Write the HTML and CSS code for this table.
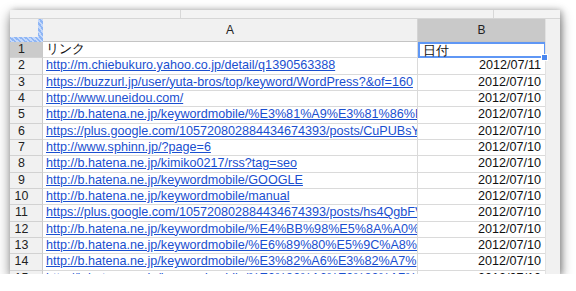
FILE: index.html
```html
<!DOCTYPE html>
<html>
<head>
<meta charset="utf-8">
<link rel="stylesheet" href="styles.css">
</head>
<body>
<div class="window">
  <div class="topstrip"><span class="ts1"></span><span class="ts2"></span><span class="ts3"></span></div>
  <div class="sheet">
    <div class="corner"></div>
    <div class="colhead">A</div>
    <div class="colhead sel">B</div>
    <div class="gutter"></div>

    <div class="rn sel">1</div><div class="ca">リンク</div><div class="cb head active">日付<span class="handle"></span></div><div class="gutter"></div>
    <div class="rn">2</div><div class="ca"><a>http://m.chiebukuro.yahoo.co.jp/detail/q1390563388</a></div><div class="cb">2012/07/11</div><div class="gutter"></div>
    <div class="rn">3</div><div class="ca"><a>https://buzzurl.jp/user/yuta-bros/top/keyword/WordPress?&amp;of=160</a></div><div class="cb">2012/07/10</div><div class="gutter"></div>
    <div class="rn">4</div><div class="ca"><a>http://www.uneidou.com/</a></div><div class="cb">2012/07/10</div><div class="gutter"></div>
    <div class="rn">5</div><div class="ca"><a>http://b.hatena.ne.jp/keywordmobile/%E3%81%A9%E3%81%86%E3</a></div><div class="cb">2012/07/10</div><div class="gutter"></div>
    <div class="rn">6</div><div class="ca"><a>https://plus.google.com/105720802884434674393/posts/CuPUBsY</a></div><div class="cb">2012/07/10</div><div class="gutter"></div>
    <div class="rn">7</div><div class="ca"><a>http://www.sphinn.jp/?page=6</a></div><div class="cb">2012/07/10</div><div class="gutter"></div>
    <div class="rn">8</div><div class="ca"><a>http://b.hatena.ne.jp/kimiko0217/rss?tag=seo</a></div><div class="cb">2012/07/10</div><div class="gutter"></div>
    <div class="rn">9</div><div class="ca"><a>http://b.hatena.ne.jp/keywordmobile/GOOGLE</a></div><div class="cb">2012/07/10</div><div class="gutter"></div>
    <div class="rn">10</div><div class="ca"><a>http://b.hatena.ne.jp/keywordmobile/manual</a></div><div class="cb">2012/07/10</div><div class="gutter"></div>
    <div class="rn">11</div><div class="ca"><a>https://plus.google.com/105720802884434674393/posts/hs4QgbFV</a></div><div class="cb">2012/07/10</div><div class="gutter"></div>
    <div class="rn">12</div><div class="ca"><a>http://b.hatena.ne.jp/keywordmobile/%E4%BB%98%E5%8A%A0%</a></div><div class="cb">2012/07/10</div><div class="gutter"></div>
    <div class="rn">13</div><div class="ca"><a>http://b.hatena.ne.jp/keywordmobile/%E6%89%80%E5%9C%A8%</a></div><div class="cb">2012/07/10</div><div class="gutter"></div>
    <div class="rn">14</div><div class="ca"><a>http://b.hatena.ne.jp/keywordmobile/%E3%82%A6%E3%82%A7%</a></div><div class="cb">2012/07/10</div><div class="gutter"></div>
    <div class="rn">15</div><div class="ca"><a>http://b.hatena.ne.jp/keywordmobile/%E3%82%A6%E3%82%A7%</a></div><div class="cb">2012/07/10</div><div class="gutter"></div>
  </div>
</div>
</body>
</html>
```

FILE: styles.css
```css
html, body {
  margin: 0;
  padding: 0;
  background: #ffffff;
}
body {
  padding: 10px 16px 0 10px;
  font-family: "Liberation Sans", Arial, sans-serif;
  font-size: 12.6px;
  color: #111;
}
.window {
  width: 550px;
  height: 264px;
  overflow: hidden;
  background: #f1f1f1;
  box-shadow: 0 5px 12px rgba(0,0,0,0.45), 2px 0 6px rgba(0,0,0,0.25);
}
.topstrip {
  display: flex;
  height: 9px;
  background: #f3f3f3;
  border-bottom: 1px solid #d6d6d6;
  box-sizing: border-box;
}
.topstrip span { display: block; height: 100%; }
.ts1 { width: 170px; border-right: 1px solid #d8d8d8; }
.ts2 { width: 312px; border-right: 1px solid #d8d8d8; }
.ts3 { flex: 1; }
.sheet {
  display: grid;
  grid-template-columns: 33px 375px 127px 15px;
  grid-template-rows: 23px;
  grid-auto-rows: 16.33px;
}
.corner {
  background: #f1f1f1;
  border-right: 5px solid transparent;
  border-bottom: 5px solid transparent;
  border-image: repeating-linear-gradient(45deg, #8fb6f5 0 1.5px, #c4d8fa 1.5px 3px) 5;
}
.colhead {
  background: #f1f1f1;
  border-right: 1px solid #d4d4d4;
  border-bottom: 1px solid #c4c4c4;
  display: flex;
  align-items: center;
  justify-content: center;
  color: #222;
  font-size: 12px;
}
.colhead.sel {
  background: #c9c9c9;
  border-right: none;
}
.gutter {
  background: #f1f1f1;
  border-left: 1px solid #e2e2e2;
}
.rn {
  background: #f1f1f1;
  border-bottom: 1px solid #d2d2d2;
  border-right: 1px solid #c9c9c9;
  box-sizing: border-box;
  padding-right: 9px;
  text-align: center;
  font-size: 12.4px;
  color: #222;
  line-height: 15.5px;
}
.rn.sel { background: #cbcbcb; }
.ca, .cb {
  background: #fff;
  border-bottom: 1px solid #dadada;
  box-sizing: border-box;
  white-space: nowrap;
  overflow: hidden;
  line-height: 15.5px;
}
.ca {
  padding-left: 3px;
  border-right: 1px solid #dadada;
}
.cb {
  text-align: right;
  padding-right: 4px;
}
.ca a {
  color: #1a4fd0;
  text-decoration: underline;
}
.cb.head {
  text-align: left;
  padding-left: 3px;
  overflow: visible;
  position: relative;
  line-height: 14px;
}
.cb.active {
  border: 2px solid #5f97f5;
  border-right-width: 1px;
}
.handle {
  position: absolute;
  right: -4px;
  bottom: -5px;
  width: 5px;
  height: 5px;
  background: #4a87ee;
  border: 1px solid #fff;
}
```
